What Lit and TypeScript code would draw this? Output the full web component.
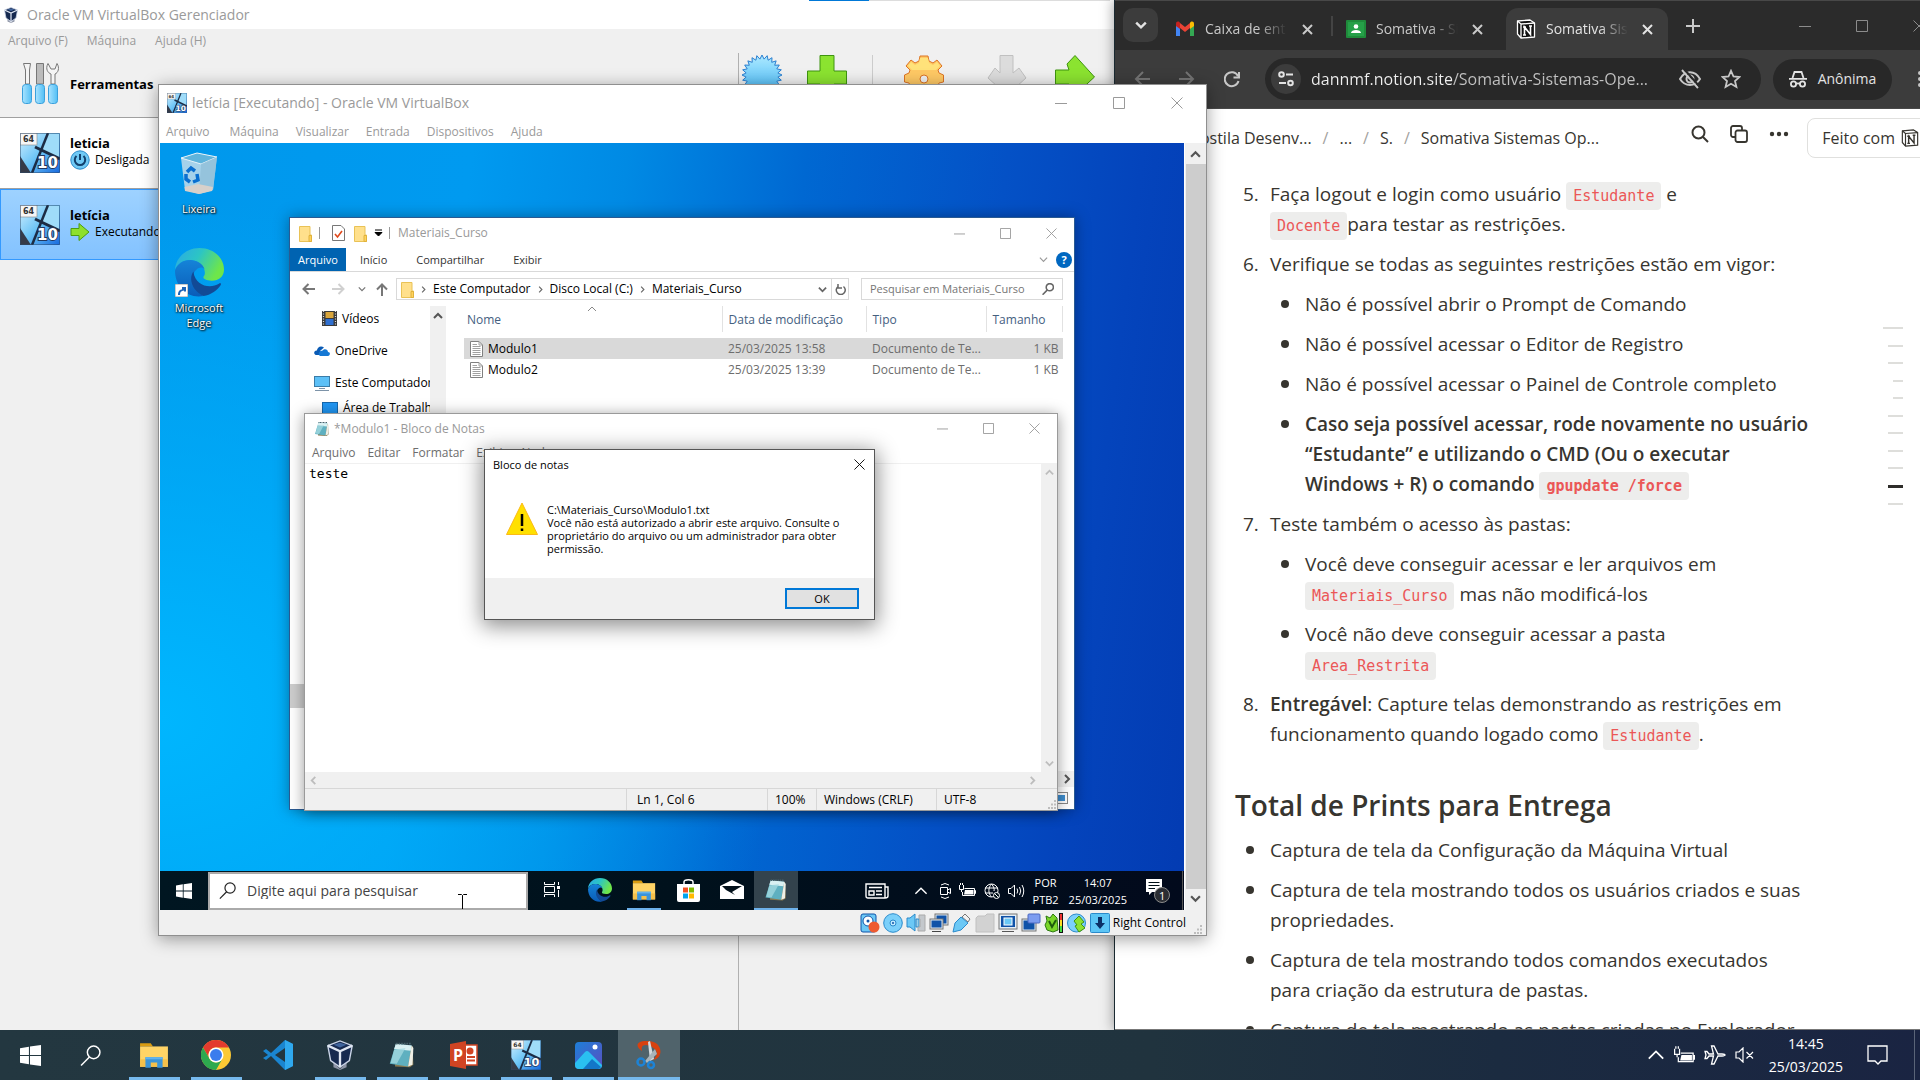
import { LitElement, html, css, svg } from "lit";
import { customElement } from "lit/decorators.js";

/* ---------- shared rules ---------- */
const base = css`
  * { box-sizing: border-box; }
  :host {
    display: block;
    font-family: "Open Sans", "Noto Sans", sans-serif;
    font-size: 12px;
    line-height: 16px;
  }
  button, input, textarea {
    font: inherit; color: inherit; background: none; border: 0; padding: 0; margin: 0; outline: 0;
  }
  button { display: flex; align-items: center; justify-content: center; white-space: nowrap; }
  a { color: inherit; text-decoration: none; }
  svg { display: block; flex: none; }
  .row { display: flex; align-items: center; }
  .col { display: flex; flex-direction: column; }
  .grow { flex: 1; min-width: 0; }
`;

/* ---------- icons ---------- */
const line = (d: string, w: number, h: number, sw = 1) => html`
  <svg width=${w} height=${h} viewBox="0 0 ${w} ${h}" fill="none" stroke="currentColor" stroke-width=${sw}><path d=${d} /></svg>`;

const iMin = line("M0 6.5H12", 12, 12);
const iMax = line("M.5 .5H11.500V11.500H.5Z", 12, 12);
const iClose = line("M.5 .5L11.500 11.500M11.500 .5L.5 11.500", 12, 12);
const chevron = (dir: "up" | "down" | "left" | "right", s = 10, sw = 2) => {
  const paths = { up: "M1 7L5 3L9 7", down: "M1 3L5 7L9 3", left: "M7 1L3 5L7 9", right: "M3 1L7 5L3 9" };
  return html`<svg width=${s} height=${s} viewBox="0 0 10 10" fill="none" stroke="currentColor" stroke-width=${sw}><path d=${paths[dir]} /></svg>`;
};
const iFolder = (w = 13, h = 17) => html`
  <svg width=${w} height=${h} viewBox="0 0 13 17"><path d="M.5 1.500H11V10H12.500V16.500H.5Z" fill="#ffe08c" stroke="#e9c256" /><path d="M10 10.500H12.500V16.500H10Z" fill="#ffd35c" stroke="#e0b23c" /></svg>`;
const iDoc = html`
  <svg width="13" height="16" viewBox="0 0 13 16"><path d="M.5 .5H9L12.500 4V15.500H.5Z" fill="#fff" stroke="#808080" /><path d="M9 .5V4H12.500M2.500 3.500H7M2.500 5.500H10.500M2.500 7.500H10.500M2.500 9.500H10.500M2.500 11.500H10.500M2.500 13.500H10.500" fill="none" stroke="#a0a0a0" /></svg>`;
const iNotepad = (s: number) => html`
  <svg width=${s} height=${s} viewBox="0 0 32 32"><path d="M9 4L28 6L29 27L25 30L8 29Z" fill="#8b7a50" /><path d="M9 3L27 5L23 29L2 26Z" fill="#5fb0c0" /><path d="M9 3L27 5L26 11L7 9Z" fill="#d9f0f2" /><path d="M7 10L20 8L10 26L3 25Z" fill="#a6dbe2" opacity=".75" /><path d="M27 5L29 8L28 27L23 29Z" fill="#efefe6" /><path d="M9 3H27" stroke="#46606a" stroke-width="2" stroke-dasharray="2 1" /></svg>`;
const iWin = (s: number) => html`
  <svg width=${s} height=${s} viewBox="0 0 20 20" fill="#fff"><path d="M0 3L8.500 1.700V9.500H0ZM9.500 1.500L20 0V9.500H9.500ZM0 10.500H8.500V18.300L0 17ZM9.500 10.500H20V20L9.500 18.500Z" /></svg>`;
const iLoupe = (s: number, sw = 1) => html`
  <svg width=${s} height=${s} viewBox="0 0 20 20" fill="none" stroke="currentColor" stroke-width=${sw}><circle cx="13" cy="7" r="6" /><path d="M9 11.500L1 19.500" /></svg>`;
const iExplorer = (s: number) => html`
  <svg width=${s} height=${s} viewBox="0 0 28 28"><path d="M1 3H11L13 6H1Z" fill="#d99c12" /><path d="M1 6H27V25H1Z" fill="#ffd466" /><path d="M1 18H27V25H1Z" fill="#f5c04a" /><path d="M6 16H22V26H17V21H11V26H6Z" fill="#3b94d9" /><path d="M6 16H22V18H6Z" fill="#62b3ee" /></svg>`;
const iVmOs = (s: number) => html`
  <svg width=${s} height=${s} viewBox="0 0 40 40">
    <defs><linearGradient id="g" x1="0" y1="0" x2="1" y2="1"><stop offset="0" stop-color="#d5f1ff" /><stop offset=".5" stop-color="#6cc4f6" /><stop offset="1" stop-color="#1668dd" /></linearGradient></defs>
    <rect width="40" height="40" rx="1" fill="url(#g)" />
    <path d="M20 18L27 1H39V25Z" fill="#9fdcf9" />
    <path d="M0 23L11 40H0Z" fill="#353a48" /><path d="M28 0L12 40" stroke="#1c2c44" stroke-width="2.500" /><path d="M15 14L40 26" stroke="#1c2c44" stroke-width="3" fill="none" />
    <rect width="17" height="12" fill="#f6f6f6" stroke="#888" stroke-width=".6" />
    <text x="3" y="9" font-family="DejaVu Sans" font-size="8" font-weight="700" fill="#333">64</text>
    <text x="17" y="35" font-family="DejaVu Sans" font-size="15" font-weight="700" fill="#fff" stroke="#23375c" stroke-width="2" paint-order="stroke">10</text>
    <rect x=".5" y=".5" width="39" height="39" fill="none" stroke="#2d4a6a" opacity=".5" />
  </svg>`;
const iVBox = (s: number) => html`
  <svg width=${s} height=${s} viewBox="0 0 32 32"><path d="M9 24L16 31L23 24V29L16 32L9 29Z" fill="#8d94a6" /><path d="M3 6L16 1L29 6L26 22L16 29L6 22Z" fill="#16294f" stroke="#c9d3e6" stroke-width="1.500" /><path d="M3 6L16 12L29 6M16 12V29" stroke="#dfe6f2" stroke-width="2.500" fill="none" /><path d="M9 5L16 3L23 5L16 8Z" fill="#40649c" /></svg>`;
const iEdge = (s: number) => html`
  <svg width=${s} height=${s} viewBox="0 0 48 48">
    <defs>
      <linearGradient id="e1" x1="0" y1="0" x2="1" y2=".4"><stop offset="0" stop-color="#2aa8e8" /><stop offset=".5" stop-color="#2cc5c4" /><stop offset="1" stop-color="#6ee64a" /></linearGradient>
      <linearGradient id="e2" x1="0" y1="0" x2="0" y2="1"><stop offset="0" stop-color="#1583d8" /><stop offset="1" stop-color="#0a5cb8" /></linearGradient>
    </defs>
    <path d="M0 21C1 9 11 0 24 0C38 0 48 10 48 21C48 28 43 32 36 32C30 32 27 30 28 28C31 25 29 14 17 12C9 11 3 15 0 21Z" fill="url(#e1)" />
    <path d="M0 22C3 15 9 11 17 12C24 13 28 17 29 21C26 17 20 20 18 26C16 34 20 43 28 47C12 50 0 38 0 22Z" fill="url(#e2)" />
    <path d="M18 23C13 30 17 42 28 47C35 46 41 42 45 36C45 34 44 34 43 35C35 40 20 38 18 23Z" fill="#124a96" />
  </svg>`;
const iNotion = (s: number, ink: string, paper: string) => html`
  <svg width=${s} height=${s} viewBox="0 0 20 20"><path d="M1.500 2L14 1L18.500 4V18L5 19L1.500 15Z" fill=${paper} stroke=${ink} stroke-width="1.300" stroke-linejoin="round" /><path d="M1.500 2L5 5V19M5 5L18.500 4" fill="none" stroke=${ink} stroke-width="1.300" /><path d="M8.500 16V8L14.500 15.500V7M7 8H10M13 7H16M7 16H10" stroke=${ink} stroke-width="1.600" fill="none" /></svg>`;
const grip = html`<svg width="10" height="10" viewBox="0 0 10 10" fill="#bdbdbd"><path d="M7 0H9V2H7ZM4 3.500H6V5.500H4ZM7 3.500H9V5.500H7ZM1 7H3V9H1ZM4 7H6V9H4ZM7 7H9V9H7Z" /></svg>`;
const batt = (w: number) => html`<svg width=${w} height=${w} viewBox="0 0 17 17"><path d="M5.500 6.500H15.500V13.500H3.500V10M15.500 8.500H16.500V11.500H15.500" fill="none" stroke="#fff" /><path d="M6 8H14.500V12.500H5Z" fill="#fff" /><path d="M.5 3V7.500H4.500V3M1.500 3V1M3.500 3V1M2.500 7.500V10" fill="none" stroke="#fff" /></svg>`;

const winButtons = () => html`
  <button aria-label="Minimizar">${iMin}</button>
  <button aria-label="Maximizar">${iMax}</button>
  <button aria-label="Fechar">${iClose}</button>`;

/* ---------- VirtualBox manager ---------- */
@customElement("vbox-manager")
class VboxManager extends LitElement {
  static styles = [base, css`
    :host { background: #f0f0f0; overflow: hidden; color: #9a9a9a; font-size: 13px; }
    .shell { height: 100%; }
    .title { height: 29px; background: #fff; gap: 8px; padding-left: 3px; font-size: 14px; position: relative; }
    .progress { position: absolute; left: 809px; right: 4px; top: 0; height: 1px; background: #ddd; }
    .progress i { display: block; width: 60px; height: 1px; background: #0078d7; }
    nav { height: 24px; gap: 19px; padding-left: 8px; font-size: 12px; }
    .body { flex: 1; display: flex; }
    .list { width: 739px; border-right: 1px solid #b0b0b0; color: #000; }
    .tools { height: 65px; border-bottom: 1px solid #a0a0a0; gap: 11px; padding: 0 0 3px 22px; font-weight: 700; }
    .vm { width: 100%; height: 71px; justify-content: flex-start; gap: 10px; padding-left: 20px; background: #fff; border-bottom: 1px solid #a0a0a0; text-align: left; }
    .vm.on { background: linear-gradient(#9ed2ff, #83c2ff); border: 1px solid #3399ff; padding-left: 19px; }
    .vm b { display: block; line-height: 14px; }
    .vm .row { gap: 5px; line-height: 20px; font-size: 12px; }
    .bar { height: 60px; align-items: flex-start; padding: 2px 0 0 3px; }
    .bar span { width: 1px; height: 36px; background: #ccc; margin: 0 31px 0 25px; }
    .b2 { margin-left: 25px; } .b4 { margin-left: 43px; } .b5 { margin-left: 28px; }
  `];
  render() {
    const pts = Array.from({ length: 48 }, (_, i) => {
      const r = i % 2 ? 16 : 20, a = (i * Math.PI) / 24;
      return `${20 + r * Math.sin(a)},${20 - r * Math.cos(a)}`;
    }).join(" ");
    return html`<div class="shell col">
      <div class="title row">${iVBox(16)}<span>Oracle VM VirtualBox Gerenciador</span><div class="progress"><i></i></div></div>
      <nav class="row"><button>Arquivo (F)</button><button>Máquina</button><button>Ajuda (H)</button></nav>
      <div class="body">
        <div class="list">
          <div class="tools row">
            <svg width="37" height="41" viewBox="0 0 37 41">
              <defs><linearGradient id="t" x2="1"><stop stop-color="#a9e3ff" /><stop offset="1" stop-color="#52bff5" /></linearGradient></defs>
              <g fill="#f4f4f4" stroke="#777"><path d="M1.500 .5H8.500L7.500 7V21H3.500V7Z" /><path d="M14.500 .5H21.500V21H14.500Z" fill="#bbb" /><path d="M26 .5C23 6 26 10 29 11V21H33V11C36 10 38 5 35 .5L33 6H29Z" /></g>
              <g fill="url(#t)" stroke="#3aa0dc"><rect x=".5" y="21.500" width="9" height="19" rx="3" /><rect x="13.500" y="21.500" width="9" height="19" rx="3" /><rect x="26.500" y="21.500" width="9" height="19" rx="3" /></g>
            </svg>Ferramentas
          </div>
          <button class="vm">${iVmOs(40)}<span><b>leticia</b><span class="row">
            <svg width="20" height="20" viewBox="0 0 20 20"><circle cx="10" cy="10" r="9.200" fill="#6fc9f5" stroke="#2a88c8" /><path d="M6.500 6A5.200 5.200 0 1 0 13.500 6M10 4V10" fill="none" stroke="#12406c" stroke-width="2" /></svg>Desligada</span></span></button>
          <button class="vm on">${iVmOs(40)}<span><b>letícia</b><span class="row">
            <svg width="20" height="20" viewBox="0 0 20 20"><path d="M1 6.500H9V1.500L19 10L9 18.500V13.500H1Z" fill="#8ee02c" stroke="#4c9c10" /></svg>Executando</span></span></button>
        </div>
        <div class="bar row">
          <button aria-label="Novo"><svg width="40" height="40" viewBox="0 0 40 40"><defs><linearGradient id="n" x2="0" y2="1"><stop stop-color="#aeeaff" /><stop offset="1" stop-color="#3fb4f5" /></linearGradient></defs><polygon points=${pts} fill="url(#n)" stroke="#2a7fd0" /></svg></button>
          <button class="b2" aria-label="Acrescentar"><svg width="40" height="40" viewBox="0 0 40 40"><path d="M13 .5H27V16H39.500V29H27V40H13V29H.5V16H13Z" fill="#8be330" stroke="#3f9410" /></svg></button>
          <span></span>
          <button aria-label="Configurações"><svg width="40" height="40" viewBox="0 0 40 40"><path d="M16 1H24L25 6L29 8L33 5L38 11L34 15L35 18L39.500 20V27L35 28L33 33L36 37H4L7 33L5 28L.5 27V20L5 18L6 15L2 11L7 5L11 8L15 6Z" fill="#ffc965" stroke="#dd7424" /><path d="M16 3H24L25 8L29 10L33 7L36 11L32 15H8L4 11L7 7L11 10L15 8Z" fill="#ffe27a" /><circle cx="20" cy="24" r="4" fill="#f0f0f0" stroke="#dd7424" /></svg></button>
          <button class="b4" aria-label="Descartar"><svg width="40" height="40" viewBox="0 0 40 40"><path d="M13 .5H26V18L32 13L39 23L20 40L1 23L8 13L13 18Z" fill="#dcdcdc" stroke="#c0c0c0" /></svg></button>
          <button class="b5" aria-label="Iniciar"><svg width="40" height="40" viewBox="0 0 40 40"><path d="M.5 15H14L12 9L20 .5L39.500 22L20 40L12 34L14 29H.5Z" fill="#8be330" stroke="#3f9410" /></svg></button>
        </div>
      </div>
    </div>`;
  }
}

/* ---------- Browser with the course page ---------- */
@customElement("course-browser")
class CourseBrowser extends LitElement {
  static styles = [base, css`
    :host { background: #fff; overflow: hidden; color: #37352f; box-shadow: -2px 0 12px rgba(0, 0, 0, .35); border-bottom: 1px solid #777; }
    .tabs { height: 50px; background: #2b2b2b; border-top: 1px solid #484848; align-items: flex-end; color: #c9c9c9; font-size: 14px; }
    .tabs > * { flex: none; }
    .drop { width: 35px; height: 34px; margin: 0 10px 8px 8px; border-radius: 10px; background: #3c3c3c; color: #e3e3e3; }
    .tab { width: 170px; height: 42px; padding-left: 10px; border-radius: 12px 12px 0 0; }
    .tab.on { width: 162px; background: #3c3c3c; color: #e3e3e3; }
    .tab.first { width: 154px; padding-left: 7px; }
    .tab .lbl { width: 82px; margin: 0 14px 0 10px; overflow: hidden; white-space: nowrap; -webkit-mask-image: linear-gradient(90deg, #000 65%, transparent); }
    .tab.first .lbl { margin-right: 15px; }
    .split { width: 2px; height: 20px; margin: 0 3px 14px 9px; background: #444; }
    .plus { margin: 0 0 17px 18px; }
    .win { margin-left: auto; height: 48px; }
    .win button { width: 57px; color: #8c8c8c; }
    .tool { height: 59px; background: #3c3c3c; border-bottom: 1px solid #494949; padding-left: 19px; color: #c7c7c7; }
    .tool > button { flex: none; margin-right: 28px; }
    .dim { color: #747474; }
    .omni { flex: none; width: 496px; height: 42px; border-radius: 21px; background: #282828; padding: 0 20px 0 6px; margin: 0 12px 0 -4px; gap: 20px; }
    .site { width: 30px; height: 30px; border-radius: 15px; background: #3c3c3c; margin-right: -10px; }
    .omni input { flex: 1; min-width: 0; font-size: 16px; background: linear-gradient(90deg, #f0f0f0 142px, #c2c2c2 142px); -webkit-background-clip: text; -webkit-text-fill-color: transparent; }
    .tool .anon { width: 119px; height: 41px; border-radius: 21px; background: #282828; gap: 11px; color: #e3e3e3; font-size: 14px; font-weight: 500; margin-right: 25px; }
    .crumbs { height: 56px; padding: 2px 0 0 65px; gap: 11px; font-size: 16px; white-space: nowrap; }
    .crumbs i { color: #a3a29e; font-style: normal; }
    .acts { margin-left: 81px; gap: 21px; padding-bottom: 8px; }
    .made { flex: none; width: 150px; height: 40px; border: 1px solid #e0e0de; border-radius: 8px; gap: 6px; justify-content: flex-start; padding-left: 14px; margin-left: 7px; font-weight: 500; }
    main { padding: 9px 0 0 120px; font-size: 19px; line-height: 30px; white-space: nowrap; }
    ul, ol { list-style: none; margin: 0; padding: 0; }
    li { padding: 5px 0; display: grid; grid-template-columns: 35px 1fr; }
    li > ul { grid-column: 2; margin: 5px 0 -5px; }
    .n { padding-left: 8px; }
    .dot::before { content: ""; display: block; width: 8px; height: 8px; border-radius: 4px; background: #37352f; margin: 11px; }
    b { font-weight: 600; }
    code { font-family: "DejaVu Sans Mono", monospace; font-size: 15px; line-height: 18px; color: #eb5757; background: #ededec; border-radius: 4px; padding: 5px 7px; }
    h2 { font-size: 28px; line-height: 36px; font-weight: 600; margin: 0; padding: 33px 0 7px; }
    .toc { position: absolute; right: 44px; top: 327px; height: 178px; justify-content: space-between; align-items: flex-end; }
    .toc a { width: 15px; height: 2px; background: #dededb; }
    .toc .w20 { width: 20px; } .toc .w10 { width: 10px; } .toc .now { background: #2e2d2a; height: 3px; }
  `];
  render() {
    const x = line("M1 1L10 10M10 1L1 10", 11, 11, 2);
    const dot = html`<span class="dot"></span>`;
    return html`
      <div class="tabs row">
        <button class="drop" aria-label="Pesquisar guias">${chevron("down", 12, 2)}</button>
        <div class="tab first row">
          <svg width="20" height="16" viewBox="0 0 20 16"><path d="M1 3V15H5V7Z" fill="#4285f4" /><path d="M19 3V15H15V7Z" fill="#34a853" /><path d="M5 2L10 6L15 2V7L10 11L5 7Z" fill="#ea4335" /><path d="M1 3C1 0 4 0 5 2V8L1 5Z" fill="#c5221f" /><path d="M19 3C19 0 16 0 15 2V8L19 5Z" fill="#fbbc04" /></svg>
          <span class="lbl">Caixa de entrada</span><button aria-label="Fechar guia">${x}</button>
        </div>
        <span class="split"></span>
        <div class="tab row">
          <svg width="20" height="18" viewBox="0 0 20 18"><rect width="20" height="18" rx="1" fill="#1f8b3b" /><rect x="2" y="2" width="16" height="14" fill="#25a048" /><circle cx="10" cy="6.500" r="2.300" fill="#fff" /><path d="M5 13C5 9 15 9 15 13Z" fill="#fff" /></svg>
          <span class="lbl">Somativa - Sistemas</span><button aria-label="Fechar guia">${x}</button>
        </div>
        <div class="tab on row">${iNotion(20, "#fff", "#111")}<span class="lbl">Somativa Sistemas</span><button aria-label="Fechar guia">${x}</button></div>
        <button class="plus" aria-label="Nova guia">${line("M7 0V14M0 7H14", 14, 14, 2)}</button>
        <div class="win row">${winButtons()}</div>
      </div>
      <div class="tool row">
        <button class="dim" aria-label="Voltar">${line("M16 8H2M9 1L2 8L9 15", 17, 16, 2)}</button>
        <button class="dim" aria-label="Avançar">${line("M0 8H14M7 1L14 8L7 15", 17, 16, 2)}</button>
        <button aria-label="Recarregar">${line("M14.500 10A7 7 0 1 1 14 5M15 1V6.500H9.500", 17, 17, 2)}</button>
        <div class="omni row">
          <button class="site" aria-label="Informações do site">
            <svg width="16" height="16" viewBox="0 0 16 16" fill="none" stroke="#e3e3e3" stroke-width="2"><circle cx="3.500" cy="3.500" r="2.300" /><path d="M8 3.500H15M1 12H8" /><circle cx="12.500" cy="12" r="2.300" /></svg></button>
          <input aria-label="Endereço" value="dannmf.notion.site/Somativa-Sistemas-Ope..." />
          <button aria-label="Rastreamento"><svg width="22" height="20" viewBox="0 0 22 20" fill="none" stroke="currentColor" stroke-width="2"><path d="M1 10C6 1 16 1 21 10C16 18 6 18 1 10Z" /><circle cx="11" cy="10" r="3.500" /><path d="M3 1L19 19" /><path d="M5 0L21 18" stroke="#282828" /></svg></button>
          <button aria-label="Favorito"><svg width="20" height="20" viewBox="0 0 20 20" fill="none" stroke="currentColor" stroke-width="1.800"><path d="M10 1.800L12.500 7.500L18.500 8L14 12L15.400 18L10 14.800L4.600 18L6 12L1.500 8L7.500 7.500Z" /></svg></button>
        </div>
        <button class="anon"><svg width="18" height="18" viewBox="0 0 18 18" fill="none" stroke="currentColor" stroke-width="1.800"><path d="M0 8.800H18M3.500 8L5.500 2H12.500L14.500 8" /><circle cx="4.500" cy="14" r="2.600" /><circle cx="13.500" cy="14" r="2.600" /><path d="M7 13.500H11" /></svg>Anônima</button>
        <button aria-label="Menu"><svg width="6" height="18" viewBox="0 0 6 18" fill="currentColor"><circle cx="3" cy="3" r="2" /><circle cx="3" cy="9" r="2" /><circle cx="3" cy="15" r="2" /></svg></button>
      </div>
      <div class="crumbs row">
        <a href="#">Apostila Desenv...</a><i>/</i><a href="#">...</a><i>/</i><a href="#">S.</a><i>/</i><a href="#">Somativa Sistemas Op...</a>
        <div class="acts row">
          <button aria-label="Buscar"><svg width="18" height="18" viewBox="0 0 18 18" fill="none" stroke="currentColor" stroke-width="2"><circle cx="7.500" cy="7.500" r="6" /><path d="M12 12L17 17" /></svg></button>
          <button aria-label="Duplicar"><svg width="18" height="18" viewBox="0 0 18 18" fill="none" stroke="currentColor" stroke-width="1.800"><rect x="5.500" y="5.500" width="11.500" height="11.500" rx="2" /><path d="M5.500 12H3A2 2 0 0 1 1 10V3A2 2 0 0 1 3 1H10A2 2 0 0 1 12 3V5.500" /></svg></button>
          <button aria-label="Mais"><svg width="20" height="6" viewBox="0 0 20 6" fill="currentColor"><circle cx="3" cy="3" r="2.200" /><circle cx="10" cy="3" r="2.200" /><circle cx="17" cy="3" r="2.200" /></svg></button>
        </div>
        <button class="made">Feito com ${iNotion(18, "#37352f", "#fff")}</button>
      </div>
      <main>
        <ol>
          <li><span class="n">5.</span><span>Faça logout e login como usuário <code>Estudante</code> e<br /><code>Docente</code>para testar as restrições.</span></li>
          <li><span class="n">6.</span><span>Verifique se todas as seguintes restrições estão em vigor:</span>
            <ul>
              <li>${dot}<span>Não é possível abrir o Prompt de Comando</span></li>
              <li>${dot}<span>Não é possível acessar o Editor de Registro</span></li>
              <li>${dot}<span>Não é possível acessar o Painel de Controle completo</span></li>
              <li>${dot}<b>Caso seja possível acessar, rode novamente no usuário<br />“Estudante” e utilizando o CMD (Ou o executar<br />Windows + R) o comando <code>gpupdate /force</code></b></li>
            </ul></li>
          <li><span class="n">7.</span><span>Teste também o acesso às pastas:</span>
            <ul>
              <li>${dot}<span>Você deve conseguir acessar e ler arquivos em<br /><code>Materiais_Curso</code> mas não modificá-los</span></li>
              <li>${dot}<span>Você não deve conseguir acessar a pasta<br /><code>Area_Restrita</code></span></li>
            </ul></li>
          <li><span class="n">8.</span><span><b>Entregável</b>: Capture telas demonstrando as restrições em<br />funcionamento quando logado como <code>Estudante</code>.</span></li>
        </ol>
        <h2>Total de Prints para Entrega</h2>
        <ul>
          <li>${dot}<span>Captura de tela da Configuração da Máquina Virtual</span></li>
          <li>${dot}<span>Captura de tela mostrando todos os usuários criados e suas<br />propriedades.</span></li>
          <li>${dot}<span>Captura de tela mostrando todos comandos executados<br />para criação da estrutura de pastas.</span></li>
          <li>${dot}<span>Captura de tela mostrando as pastas criadas no Explorador</span></li>
        </ul>
      </main>
      <nav class="toc col" aria-label="Sumário">
        ${["w20", "", "", "w10", "w10", "", "", "", "", "now", ""].map((c) => html`<a href="#" class=${c} aria-label="Seção"></a>`)}
      </nav>`;
  }
}

/* ---------- File explorer inside the guest ---------- */
@customElement("file-explorer")
class FileExplorer extends LitElement {
  static styles = [base, css`
    :host { background: #fff; overflow: hidden; color: #000; border: 1px solid #2a5a92; box-shadow: 0 0 14px rgba(0, 0, 0, .35); font-size: 12px; }
    .shell { height: 100%; }
    .title { height: 30px; padding-left: 9px; color: #999; }
    .title span { width: 1px; height: 12px; background: #999; }
    .title .s1 { margin: 0 12px 0 7px; } .title .s2 { margin: 0 8px 0 6px; }
    .title .f2 { margin: 0 7px 0 9px; }
    .win { margin-left: auto; }
    .win button { width: 46px; height: 28px; }
    .win svg { width: 11px; height: 11px; }
    .ribbon { height: 24px; border-bottom: 1px solid #d9d9d9; padding-right: 2px; font-size: 11px; color: #333; }
    .ribbon .file { width: 56px; height: 23px; background: #0063b1; color: #fff; margin-right: 14px; }
    .ribbon button + button { margin-right: 29px; }
    .ribbon .chev { margin-left: auto; color: #999; margin-right: 8px; }
    .help { width: 16px; height: 16px; border-radius: 8px; background: #0067c0; color: #fff; font-weight: 700; text-align: center; }
    .addr { height: 34px; padding: 0 11px 0 12px; color: #777; }
    .addr > button { margin-right: 17px; }
    .addr .off { color: #d0d0d0; margin-right: 13px; }
    .addr .hist { margin-right: 10px; } .addr .up { margin-right: 8px; }
    .path { width: 453px; height: 22px; border: 1px solid #d9d9d9; padding-left: 4px; color: #000; margin-right: 12px; white-space: nowrap; }
    .path svg { color: #666; } .path > .c { margin: 0 6px; }
    .path .re { width: 17px; height: 20px; border-left: 1px solid #d9d9d9; color: #666; margin-left: 4px; }
    .find { flex: 1; min-width: 0; height: 22px; border: 1px solid #d9d9d9; padding: 0 8px; color: #666; font-size: 11px; }
    .find input { flex: 1; min-width: 0; } .find input::placeholder { color: #757575; opacity: 1; }
    .main { flex: 1; display: flex; min-height: 0; }
    .side { width: 140px; overflow: hidden; white-space: nowrap; }
    .side a { display: flex; align-items: center; gap: 5px; padding-left: 24px; height: 25px; }
    .side a.sub { padding-left: 32px; } .side a.one { height: 39px; }
    .side .thumb { height: 24px; margin-top: 264px; background: #cdcdcd; }
    .track { width: 16px; background: #f0f0f0; color: #555; display: flex; justify-content: center; padding-top: 5px; margin-right: 18px; }
    .files { position: relative; flex: 1; min-width: 0; }
    .sort { position: absolute; left: 123px; top: -2px; color: #888; }
    table { border-collapse: collapse; table-layout: fixed; width: 599px; }
    th { font-weight: 400; text-align: left; color: #44607f; height: 26px; padding: 2px 0 0 6px; border-right: 1px solid #e2e2e2; }
    th:first-child { padding-left: 3px; }
    th.n { width: 258px; } th.d { width: 144px; } th.t { width: 120px; }
    td { padding: 0 4px 0 6px; height: 21px; color: #6d6d6d; white-space: nowrap; }
    td:first-child { color: #000; padding-left: 6px; }
    td:last-child { text-align: right; }
    td .row { gap: 5px; }
    .sel td { background: #d9d9d9; }
    .gap td { height: 6px; }
    .hs { height: 16px; background: #f0f0f0; color: #555; justify-content: flex-end; padding-right: 2px; }
    .st { height: 22px; justify-content: flex-end; padding-right: 6px; }
  `];
  render() {
    const c = html`<span class="c">${chevron("right", 7, 1.6)}</span>`;
    const monitor = html`<svg width="16" height="16" viewBox="0 0 16 16"><rect x=".5" y="1.500" width="15" height="10" fill="#5cc0f7" stroke="#3a7ca8" /><path d="M1 15.500H15M5 13.500H11" stroke="#7d93a8" /></svg>`;
    return html`<div class="shell col">
      <div class="title row">
        ${iFolder()}<span class="s1"></span>
        <svg width="13" height="16" viewBox="0 0 13 16"><path d="M.5 .5H9L12.500 4V15.500H.5Z" fill="#fff" stroke="#777" /><path d="M3 9L5.500 12L10 6" fill="none" stroke="#e0491c" stroke-width="1.600" /></svg>
        <div class="f2">${iFolder()}</div>
        <svg width="9" height="8" viewBox="0 0 9 8"><path d="M1 1H8M1 3.500H8L4.500 7Z" stroke="#000" /></svg>
        <span class="s2"></span>Materiais_Curso
        <div class="win row">${winButtons()}</div>
      </div>
      <div class="ribbon row">
        <button class="file">Arquivo</button><button>Início</button><button>Compartilhar</button><button>Exibir</button>
        <span class="chev">${chevron("down", 9, 1.3)}</span><span class="help">?</span>
      </div>
      <div class="addr row">
        <button aria-label="Voltar">${line("M13 6H1.500M6.500 1L1.500 6L6.500 11", 13, 12, 2)}</button>
        <button class="off" aria-label="Avançar">${line("M0 6H11.500M6.500 1L11.500 6L6.500 11", 13, 12, 2)}</button>
        <button class="hist" aria-label="Locais recentes">${chevron("down", 8, 1.6)}</button>
        <button class="up" aria-label="Acima">${line("M6 13V1.500M1 6.500L6 1.500L11 6.500", 12, 13, 2)}</button>
        <div class="path row">${iFolder()}${c}<span>Este Computador</span>${c}<span>Disco Local (C:)</span>${c}<span>Materiais_Curso</span><span class="grow"></span>${chevron("down", 9, 2)}<button class="re" aria-label="Atualizar">${line("M8.500 2.500A4.500 4.500 0 1 1 3 2.500M3 0V4H7", 11, 11, 1.5)}</button></div>
        <div class="find row"><input aria-label="Pesquisar" placeholder="Pesquisar em Materiais_Curso" />${iLoupe(12, 2.6)}</div>
      </div>
      <div class="main">
        <nav class="side">
          <a class="sub" href="#"><svg width="15" height="15" viewBox="0 0 15 15"><rect width="15" height="15" fill="#3a3a3a" /><rect x="3.500" y="1" width="8" height="6" fill="#d9a53a" /><rect x="3.500" y="8" width="8" height="6" fill="#2f6fd0" /><path d="M1.500 0V15M13.500 0V15" stroke="#ddd" stroke-dasharray="1 1.500" stroke-width="1.200" /></svg>Vídeos</a>
          <a class="one" href="#"><svg width="16" height="12" viewBox="0 0 16 12"><path d="M2 10C-1 9 0 5 3 5.500C3 2 7 0 10 2.500L6 6V10Z" fill="#0a5bb5" /><path d="M6 11C3 9 6 5 8 6C10 3 14 4 14 7C17 7 16 11 14 11Z" fill="#1578d4" /></svg>OneDrive</a>
          <a href="#">${monitor}Este Computador</a>
          <a class="sub" href="#"><svg width="16" height="12" viewBox="0 0 16 12"><rect x=".5" y=".5" width="15" height="11" fill="#2196f3" stroke="#1567ad" /></svg>Área de Trabalho</a>
          <div class="thumb"></div>
        </nav>
        <div class="track">${chevron("up", 10, 2)}</div>
        <div class="files col">
          <div class="sort">${chevron("up", 10, 1)}</div>
          <table>
            <thead><tr><th class="n">Nome</th><th class="d">Data de modificação</th><th class="t">Tipo</th><th>Tamanho</th></tr></thead>
            <tbody>
              <tr class="gap"><td colspan="4"></td></tr>
              <tr class="sel"><td><div class="row">${iDoc}Modulo1</div></td><td>25/03/2025 13:58</td><td>Documento de Te...</td><td>1 KB</td></tr>
              <tr><td><div class="row">${iDoc}Modulo2</div></td><td>25/03/2025 13:39</td><td>Documento de Te...</td><td>1 KB</td></tr>
            </tbody>
          </table>
          <div class="grow"></div>
          <div class="hs row">${chevron("right", 10, 2)}</div>
        </div>
      </div>
      <div class="st row"><svg width="13" height="12" viewBox="0 0 13 12"><rect x=".5" y=".5" width="12" height="11" fill="#fff" stroke="#888" /><rect x="3" y="3" width="7" height="6" fill="#3f8fd0" /></svg></div>
    </div>`;
  }
}

/* ---------- Notepad ---------- */
@customElement("note-pad")
class NotePad extends LitElement {
  static styles = [base, css`
    :host { background: #fff; overflow: hidden; color: #000; border: 1px solid #9a9a9a; box-shadow: 0 2px 14px rgba(0, 0, 0, .4); }
    .shell { height: 100%; }
    .title { height: 29px; padding-left: 9px; gap: 4px; color: #999; }
    .win { margin-left: auto; }
    .win button { width: 46px; height: 28px; } .win svg { width: 11px; height: 11px; }
    nav { height: 21px; padding-left: 7px; gap: 12px; color: #6d6d6d; border-bottom: 1px solid #f0f0f0; }
    .body { flex: 1; display: grid; grid-template-columns: 1fr 16px; grid-template-rows: 1fr 16px; background: #f0f0f0; color: #bdbdbd; min-height: 0; }
    textarea { background: #fff; color: #000; resize: none; font: 13px/18px "DejaVu Sans Mono", monospace; padding: 1px 4px; overflow: hidden; }
    .v { display: flex; flex-direction: column; justify-content: space-between; align-items: center; padding: 4px 0; }
    .h { display: flex; justify-content: space-between; align-items: center; padding: 0 4px; }
    .status { height: 22px; background: #f0f0f0; border-top: 1px solid #d7d7d7; justify-content: flex-end; align-items: stretch; line-height: 22px; }
    .status span { border-left: 1px solid #d7d7d7; padding-left: 7px; }
    .a { width: 141px; } .status .a { padding-left: 10px; } .b { width: 49px; } .c { width: 120px; } .d { width: 111px; }
    .e { align-self: flex-end; }
  `];
  render() {
    return html`<div class="shell col">
      <div class="title row">${iNotepad(16)}<span>*Modulo1 - Bloco de Notas</span><div class="win row">${winButtons()}</div></div>
      <nav class="row"><button>Arquivo</button><button>Editar</button><button>Formatar</button><button>Exibir</button><button>Ajuda</button></nav>
      <div class="body">
        <textarea aria-label="Texto" .value=${"teste"} spellcheck="false"></textarea>
        <div class="v">${chevron("up", 9, 2)}${chevron("down", 9, 2)}</div>
        <div class="h">${chevron("left", 9, 2)}${chevron("right", 9, 2)}</div>
      </div>
      <div class="status row"><span class="a">Ln 1, Col 6</span><span class="b">100%</span><span class="c">Windows (CRLF)</span><span class="d">UTF-8</span><div class="e">${grip}</div></div>
    </div>`;
  }
}

/* ---------- Error dialog ---------- */
@customElement("error-dialog")
class ErrorDialog extends LitElement {
  static styles = [base, css`
    :host { background: #fff; color: #000; border: 1px solid #555; box-shadow: 0 4px 20px 2px rgba(0, 0, 0, .45); font-size: 11px; }
    .title { height: 29px; justify-content: space-between; padding: 0 9px 0 8px; }
    .title svg { width: 11px; height: 11px; }
    .msg { height: 99px; padding: 23px 0 0 21px; align-items: flex-start; gap: 9px; }
    p { margin: 1px 0 0; line-height: 13px; white-space: nowrap; }
    .foot { background: #f0f0f0; height: 41px; padding-right: 15px; justify-content: flex-end; }
    .foot button { width: 74px; height: 21px; background: #e1e1e1; border: 2px solid #0078d7; }
  `];
  render() {
    return html`<div role="alertdialog" aria-label="Bloco de notas">
      <div class="title row">Bloco de notas<button aria-label="Fechar">${iClose}</button></div>
      <div class="msg row">
        <svg width="32" height="33" viewBox="0 0 32 33"><path d="M16 1L31.500 32.500H.5Z" fill="#ffe000" stroke="#fbb917" /><path d="M16 12V24M16 26.500V29" stroke="#000" stroke-width="2.500" /></svg>
        <p>C:\\Materiais_Curso\\Modulo1.txt<br />Você não está autorizado a abrir este arquivo. Consulte o<br />proprietário do arquivo ou um administrador para obter<br />permissão.</p>
      </div>
      <div class="foot row"><button>OK</button></div>
    </div>`;
  }
}

/* ---------- Virtual machine window ---------- */
const B = "#6cc8f5", D = "#0f52a8";
const statusIcons = [
  svg`<rect x="1" y="1" width="15" height="18" rx="2" fill=${B} stroke=${D} /><circle cx="8" cy="8" r="5" fill="#fff" stroke=${D} /><circle cx="8" cy="8" r="1.500" fill=${D} /><circle cx="14" cy="14" r="5.500" fill="#ee5a30" />`,
  svg`<circle cx="10" cy="10" r="9.300" fill="#7bd0fa" stroke="#2a8acb" /><circle cx="10" cy="10" r="3" fill="#bfe9fd" stroke="#2a8acb" /><circle cx="10" cy="10" r="1" fill=${D} />`,
  svg`<path d="M1 5H4L9 1V18L4 14H1Z" fill=${B} stroke="#2a8acb" /><path d="M10 6H13V14H10Z" fill="#9ccfe8" stroke="#2a8acb" /><path d="M13 2H19V18H12V14H14V6H13Z" fill="#c4c8cc" stroke="#aaa" />`,
  svg`<rect x="6" y="1" width="13" height="11" fill="#dfe8f0" stroke="#777" /><rect x="7.500" y="2.500" width="10" height="8" fill=${D} /><rect x="1" y="6" width="13" height="10" fill="#dfe8f0" stroke="#777" /><rect x="2.500" y="7.500" width="10" height="7" fill=${D} /><path d="M3 18.500H12" stroke="#444" />`,
  svg`<path d="M13 1L18 6L16 9L10 4Z" fill="#f2f2f2" stroke="#777" /><path d="M9 4L16 10L9 17L1 19L3 10Z" fill=${B} stroke="#2a8acb" />`,
  svg`<path d="M1 5L3 3H10L12 1H19V19H1Z" fill="#d2d2d2" stroke="#c0c0c0" />`,
  svg`<rect x="1" y="1" width="18" height="15" fill="#e6eef5" stroke="#777" /><rect x="3" y="3" width="14" height="11" fill=${D} /><rect x="6" y="5" width="8" height="7" fill=${B} stroke="#fff" /><path d="M4 18.500H16" stroke="#555" />`,
  svg`<rect x="1" y="6" width="14" height="12" fill="#dfe8f0" stroke="#777" /><rect x="2.500" y="7.500" width="11" height="9" fill=${D} /><rect x="7" y="1" width="12" height="9" rx="1" fill="#7c9cf0" stroke="#4c68c0" />`,
  svg`<path d="M2 3L6 5L9 1L13 5L14 17L9 19L3 17L1 12L3 8Z" fill="#7bd62a" stroke="#2c7a10" /><path d="M5 8L8 14L12 7" fill="none" stroke="#1f5c0c" stroke-width="2" /><path d="M15 0H19V20H15Z" fill="#111" /><path d="M16 1H18V7H16Z" fill="#e33" /><path d="M16 7H18V13H16Z" fill="#fd2" /><path d="M16 13H18V19H16Z" fill="#4d4" />`,
  svg`<circle cx="9.500" cy="10" r="9" fill="#7bd0fa" stroke="#2a8acb" /><path d="M7 8L12 3L17 9L14 11L18 15L12 19L8 13L10 12Z" fill="#8be330" stroke="#3f9410" />`,
  svg`<rect x=".5" y=".5" width="19" height="19" rx="1" fill="#5cc5f5" stroke="#2a8acb" /><path d="M8 4H12V10H15L10 16L5 10H8Z" fill="#0b2f66" />`,
];

@customElement("vm-window")
class VmWindow extends LitElement {
  static styles = [base, css`
    :host { background: #fff; border: 1px solid #8f8f8f; box-shadow: 0 3px 16px rgba(0, 0, 0, .38); color: #9a9a9a; }
    .title { height: 35px; padding-left: 8px; gap: 5px; font-size: 14px; }
    .win { margin-left: auto; }
    .win button { width: 58px; height: 34px; }
    .menu { height: 23px; padding-left: 7px; gap: 17px; font-size: 12px; }
    .menu .wide { margin-right: 3px; }
    .view { display: flex; padding-left: 1px; }
    .screen { position: relative; width: 1024px; height: 767px; overflow: hidden; background:
      radial-gradient(ellipse 620px 520px at 0 75%, #00b6fe, rgba(0, 180, 252, .5) 50%, transparent),
      linear-gradient(97deg, #0098ec 0, #009af0 28%, #008ae4 42%, #0068d2 58%, #0451c6 76%, #0444bc 88%, #033bb2 100%); }
    .scroll { width: 21px; background: #f0f0f0; display: flex; flex-direction: column; align-items: center; padding: 6px 0; color: #555; margin-left: 1px; gap: 4px; }
    .scroll .thumb { flex: 1; width: 20px; background: #cdcdcd; }
    .icon { position: absolute; width: 76px; color: #fff; font-size: 11px; line-height: 15px; text-align: center; text-shadow: 1px 1px 2px #000, 0 0 2px #000; align-items: center; }
    .bin { left: 1px; top: 8px; gap: 5px; } .edge { left: 1px; top: 105px; gap: 3px; }
    .edge .pic { position: relative; } .edge .pic .lnk { position: absolute; left: 0; bottom: 0; }
    file-explorer { position: absolute; left: 129px; top: 74px; width: 786px; height: 593px; }
    note-pad { position: absolute; left: 144px; top: 270px; width: 754px; height: 398px; }
    error-dialog { position: absolute; left: 324px; top: 306px; width: 391px; }
    .bar { position: absolute; left: 0; right: 0; bottom: 0; height: 39px; background: linear-gradient(90deg, #001621, #00111c 50%, #020a1c); color: #fff; }
    .start { width: 48px; }
    .search { width: 320px; height: 38px; margin-right: 2px; border: 2px solid #aaa; background: #fff; color: #222; padding-left: 9px; gap: 11px; font-size: 14px; }
    .search input { flex: 1; min-width: 0; } .search input::placeholder { color: #444; opacity: 1; }
    .app { width: 44px; height: 39px; border-bottom: 2px solid transparent; }
    .app.view1 { width: 48px; padding-right: 4px; }
    .app.open { border-color: #6db1ea; } .app.open.half { width: 34px; margin: 0 5px; }
    .app.front { background: #33434d; }
    .tray { margin-left: auto; gap: 8px; line-height: 17px; font-size: 11px; text-align: center; }
    .tray .news { margin-right: 17px; } .tray .up { margin-right: 3px; }
    .tray .time { margin: 0 10px 0 2px; }
    .tray .end { width: 1px; height: 39px; background: #555; margin: 0 1px 0 4px; }
    .pointer { position: absolute; left: 298px; bottom: 1px; }
    .status { height: 25px; background: #f0f0f0; justify-content: flex-end; gap: 3px; color: #000; padding-right: 3px; font-size: 12px; }
    .status .g { align-self: flex-end; margin-left: 4px; }
  `];
  render() {
    return html`
      <div class="title row">${iVmOs(20)}<span>letícia [Executando] - Oracle VM VirtualBox</span><div class="win row">${winButtons()}</div></div>
      <nav class="menu row"><button class="wide">Arquivo</button><button>Máquina</button><button>Visualizar</button><button>Entrada</button><button>Dispositivos</button><button>Ajuda</button></nav>
      <div class="view">
        <div class="screen">
          <div class="icon bin col">
            <svg width="40" height="45" viewBox="0 0 40 45"><path d="M2 7L18 2L38 6L34 39L20 43L6 39Z" fill="#b8d8ea" opacity=".9" /><path d="M2 7L18 2L38 6L22 13Z" fill="#5fb4dc" stroke="#e6f3fa" /><path d="M22 13L20 43L34 39L38 6Z" fill="#8fbcd6" opacity=".7" /><path d="M5.500 36L19 33L34 36L33 40L20 43L6 40Z" fill="#d8d0ca" /><path d="M8 21L12 17L16 20M18 23L19 29L14 31M11 31L7 28V23" fill="none" stroke="#0a6fd0" stroke-width="3.500" /></svg>
            Lixeira</div>
          <div class="icon edge col"><div class="pic">${iEdge(49)}
            <svg class="lnk" width="13" height="13" viewBox="0 0 13 13"><rect width="13" height="13" fill="#fff" stroke="#999" /><path d="M3 11C3 7 5 5.500 7 5.500V3H11V7.500H9V6.500C6 7 5 8 5 11Z" fill="#1f64b8" /></svg></div>
            <span>Microsoft<br />Edge</span></div>
          <file-explorer></file-explorer>
          <note-pad></note-pad>
          <error-dialog></error-dialog>
          <div class="bar row">
            <button class="start" aria-label="Iniciar">${iWin(16)}</button>
            <div class="search row">${iLoupe(17, 1.4)}<input aria-label="Pesquisar" placeholder="Digite aqui para pesquisar" /></div>
            <button class="app view1" aria-label="Visão de tarefas"><svg width="17" height="15" viewBox="0 0 17 15" fill="none" stroke="#fff"><path d="M.5 0V2.500H10.500V0M.5 15V12.500H10.500V15M.5 4.500H10.500V10.500H.5ZM14.500 0V3M14.500 8V15" /><rect x="13" y="4" width="3" height="3" fill="#fff" stroke="none" /></svg></button>
            <button class="app" aria-label="Edge">${iEdge(24)}</button>
            <button class="app half open" aria-label="Explorador">${iExplorer(24)}</button>
            <button class="app" aria-label="Loja"><svg width="23" height="24" viewBox="0 0 23 24"><path d="M7 7V4C7 1 16 1 16 4V7" fill="none" stroke="#fff" stroke-width="1.500" /><path d="M0 6H23V22Q23 24 21 24H2Q0 24 0 22Z" fill="#fff" /><path d="M6 9.500H11V14.500H6Z" fill="#f25022" /><path d="M12 9.500H17V14.500H12Z" fill="#7fba00" /><path d="M6 15.500H11V20.500H6Z" fill="#00a4ef" /><path d="M12 15.500H17V20.500H12Z" fill="#ffb900" /></svg></button>
            <button class="app" aria-label="Email"><svg width="24" height="20" viewBox="0 0 24 20"><path d="M0 6L12 0L24 6V19H0Z" fill="#fff" /><path d="M2 6H22L12 12L15 15L6 10Z" fill="#02101a" /></svg></button>
            <button class="app open front" aria-label="Bloco de Notas">${iNotepad(24)}</button>
            <div class="tray row">
              <svg class="news" width="24" height="16" viewBox="0 0 24 16" fill="none" stroke="#fff" stroke-width="1.400"><path d="M1 1H20V15H3Q1 15 1 13ZM20 4H23V13Q23 15 20 15M4 4.500H17M4 8H9V12H4ZM11 8H17M11 11.500H17" /></svg>
              <span class="up">${chevron("up", 14, 1)}</span>
              <svg width="12" height="16" viewBox="0 0 12 16" fill="none" stroke="#fff"><path d="M1.500 4.500H8.500V11.500H1.500ZM8.500 7L11.500 5.500V10.500L8.500 9M2 2Q6 -1 10 2M2 14Q6 17 10 14" /></svg>
              ${batt(17)}
              <svg width="16" height="16" viewBox="0 0 16 16" fill="none" stroke="#fff"><circle cx="7.500" cy="7.500" r="6.500" /><path d="M1 5H14M1 10H9M7.500 1C4 5 4 10 7.500 14M7.500 1C10 4 10.500 6 10 8" /><circle cx="12.500" cy="12.500" r="3" fill="#001018" /><path d="M10.500 10.500L14.500 14.500" /></svg>
              <svg width="17" height="14" viewBox="0 0 17 14" fill="none" stroke="#fff"><path d="M.5 4.500H3L6.500 1V13L3 9.500H.5ZM9 4.500Q10.500 7 9 9.500M11.500 3Q14 7 11.500 11M14 1Q17.500 7 14 13" /></svg>
              <span>POR<br />PTB2</span>
              <span class="time">14:07<br />25/03/2025</span>
              <svg width="25" height="26" viewBox="0 0 25 26"><path d="M1 1H17V14H7L4 17V14H1Z" fill="#fff" /><path d="M3.500 4.500H14.500M3.500 7.500H14.500M3.500 10.500H10" stroke="#001018" /><circle cx="17" cy="17" r="7.500" fill="#2a2d33" stroke="#8a8a8a" /><text x="14" y="21.500" font-size="11" fill="#fff" font-family="Open Sans">1</text></svg>
              <span class="end"></span>
            </div>
          </div>
          <svg class="pointer" width="9" height="16" viewBox="0 0 9 16"><path d="M0 1.500H3.500L4.500 2.500L5.500 1.500H9M4.500 2.500V16" stroke="#000" fill="none" /></svg>
        </div>
        <div class="scroll">${chevron("up", 11, 2)}<div class="thumb"></div>${chevron("down", 11, 2)}</div>
      </div>
      <div class="status row">
        ${statusIcons.map((i) => html`<svg width="20" height="20" viewBox="0 0 20 20">${i}</svg>`)}
        <span>Right Control</span><div class="g">${grip}</div>
      </div>`;
  }
}

/* ---------- Host taskbar ---------- */
@customElement("host-taskbar")
class HostTaskbar extends LitElement {
  static styles = [base, css`
    :host { background: linear-gradient(90deg, #233740, #20333e 60%, #1b2b40 78%, #1a2442); color: #fff; }
    .bar { height: 50px; }
    .sys { width: 60px; height: 50px; }
    .sys + .sys { margin-right: 4px; }
    .app { position: relative; width: 62px; height: 50px; padding-right: 2px; }
    .open::after { content: ""; position: absolute; left: 5px; right: 6px; bottom: 0; height: 3px; background: #76b9ed; }
    .open.front { background: #50636b; margin-left: -2px; padding: 0; } .front::after { left: 0; right: 0; }
    .tray { margin-left: auto; gap: 9px; }
    .clock { font-size: 14px; line-height: 23px; text-align: center; margin: 0 15px 0 5px; }
    .end { width: 1px; height: 50px; background: #5a6478; margin: 0 5px 0 17px; }
  `];
  render() {
    const app = (cls: string, label: string, icon: unknown) => html`<button class="app ${cls}" aria-label=${label}>${icon}</button>`;
    return html`<div class="bar row">
      <button class="sys" aria-label="Iniciar">${iWin(21)}</button>
      <button class="sys" aria-label="Pesquisar">${iLoupe(21, 1.4)}</button>
      ${app("open", "Explorador", iExplorer(30))}
      ${app("open", "Chrome", html`<svg width="30" height="30" viewBox="0 0 30 30"><circle cx="15" cy="15" r="15" fill="#fcc934" /><path d="M2 7.500A15 15 0 0 1 28 7.500H15A7.500 7.500 0 0 0 8.500 18.800Z" fill="#e33b2e" /><path d="M2 7.500L8.500 18.800A7.500 7.500 0 0 0 21.500 18.800L15 30A15 15 0 0 1 2 7.500Z" fill="#2da94f" /><circle cx="15" cy="15" r="7.500" fill="#fff" /><circle cx="15" cy="15" r="6" fill="#3b7ded" /></svg>`)}
      ${app("", "VS Code", html`<svg width="30" height="30" viewBox="0 0 30 30"><path d="M22 0L30 4V26L22 30L8 16L3 20L0 18L5 15L0 11L3 9L8 13Z" fill="#1a85d0" /><path d="M22 8L12 15L22 22Z" fill="#22363f" /><path d="M22 0L30 4V26L22 30Z" fill="#2fa8ee" /></svg>`)}
      ${app("open", "VirtualBox", iVBox(30))}
      ${app("open", "Bloco de Notas", iNotepad(28))}
      ${app("open", "PowerPoint", html`<svg width="28" height="28" viewBox="0 0 28 28"><rect x="14" y="4" width="13" height="20" fill="#fff" stroke="#d04423" stroke-width="1.500" /><circle cx="20" cy="10" r="3.500" fill="#d04423" /><path d="M17 16H25M17 19.500H25" stroke="#d04423" stroke-width="2" /><path d="M0 3L16 0V28L0 25Z" fill="#d04423" /><text x="3" y="20" font-size="16" font-weight="700" fill="#fff" font-family="Open Sans">P</text></svg>`)}
      ${app("open", "Máquina virtual", iVmOs(30))}
      ${app("open", "Fotos", html`<svg width="27" height="27" viewBox="0 0 27 27"><defs><linearGradient id="p" x2="1" y2="1"><stop stop-color="#1d7fd8" /><stop offset="1" stop-color="#5a4fc0" /></linearGradient></defs><rect width="27" height="27" rx="4" fill="url(#p)" /><path d="M0 21L10 10Q12 8 14 10L27 23Q27 27 23 27H4Q0 27 0 23Z" fill="#2ac0f0" /><path d="M8 27L17 17L26 25Q25 27 23 27Z" fill="#1377c8" /><circle cx="20" cy="5" r="2.500" fill="#fff" /></svg>`)}
      ${app("open front", "Ferramenta de Captura", html`<svg width="28" height="30" viewBox="0 0 28 30"><path d="M14 1C-1 0 1 8 7 11C5 4 12 4 17 7C24 11 22 16 18 20C29 18 28 2 14 1Z" fill="#d8410f" /><path d="M13 2L15 1L19 19L15 21Z" fill="#d5dade" /><path d="M20 9L10 21L12 23L22 14Z" fill="#aab4ba" /><circle cx="6" cy="22" r="3.500" fill="none" stroke="#1d83d6" stroke-width="2.500" /><circle cx="16" cy="25" r="3" fill="none" stroke="#1d83d6" stroke-width="2.500" /></svg>`)}
      <div class="tray row">
        ${chevron("up", 18, 1)}${batt(21)}
        <svg width="22" height="20" viewBox="0 0 22 20" fill="none" stroke="#fff" stroke-width="1.300"><path d="M1 6.500H3L5 9H9.500L7.500 1H10L14 9H18Q21 9.200 21 10Q21 10.800 18 11H14L10 19H7.500L9.500 11H5L3 13.500H1L2 10Z" /></svg>
        <svg width="20" height="16" viewBox="0 0 20 16" fill="none" stroke="#fff" stroke-width="1.200"><path d="M1 5H4L8 1V15L4 11H1ZM11.500 5L18 11.500M18 5L11.500 11.500" /></svg>
        <div class="clock">14:45<br />25/03/2025</div>
        <svg width="21" height="21" viewBox="0 0 21 21" fill="none" stroke="#fff" stroke-width="1.300"><path d="M1 1H20V16H14L11 19L8 16H1Z" /></svg>
        <span class="end"></span>
      </div>
    </div>`;
  }
}

/* ---------- Desktop ---------- */
@customElement("app-root")
class AppRoot extends LitElement {
  static styles = [base, css`
    :host { position: relative; height: 100vh; overflow: hidden; background: #22353f; }
    vbox-manager { position: absolute; left: 0; top: 0; width: 1114px; bottom: 50px; }
    course-browser { position: absolute; left: 1115px; right: -27px; top: 0; bottom: 50px; }
    vm-window { position: absolute; left: 158px; top: 84px; width: 1049px; }
    host-taskbar { position: absolute; left: 0; right: 0; bottom: 0; }
  `];
  render() {
    return html`<vbox-manager></vbox-manager><course-browser></course-browser><vm-window></vm-window><host-taskbar></host-taskbar>`;
  }
}
